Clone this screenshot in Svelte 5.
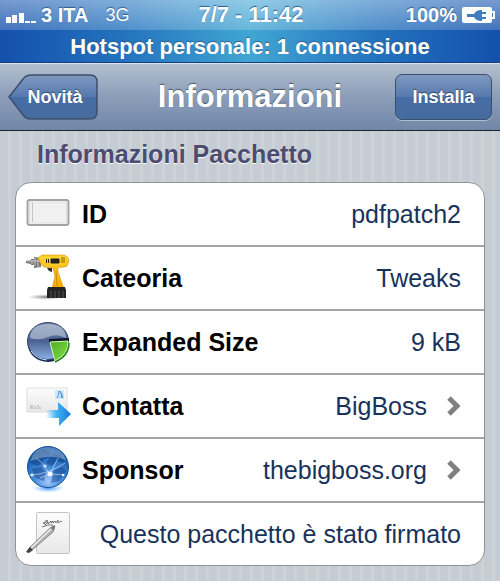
<script>
	const rows = [
		{ icon: 'id', label: 'ID', value: 'pdfpatch2' },
		{ icon: 'drill', label: 'Cateoria', value: 'Tweaks' },
		{ icon: 'size', label: 'Expanded Size', value: '9 kB' },
		{ icon: 'mail', label: 'Contatta', value: 'BigBoss', link: true },
		{ icon: 'globe', label: 'Sponsor', value: 'thebigboss.org', link: true },
		{ icon: 'signed', label: '', value: 'Questo pacchetto è stato firmato' }
	];
</script>

{#snippet icon(name)}
	<svg class="icon" viewBox="0 0 46 50" aria-hidden="true">
		{#if name === 'id'}
			<rect x="1.5" y="11" width="41" height="25" rx="2" fill="#fff" stroke="#a3a3a3" stroke-width="2" />
			<rect x="3.5" y="13" width="37" height="21" fill="#f0f0f0" stroke="#ddd" />
			<path d="M6.500 13.500V33" stroke="#c4c4c4" />
		{:else if name === 'drill'}
			<ellipse cx="20" cy="44" rx="19" ry="3" fill="url(#shadow)" />
			<path d="M0 8l5-1v-1h3V4l7 1v9l-7 1v-3H5v-1l-5-1z" fill="#777" />
			<path d="M1 8h13M6 7v4M9 5v8M12 6v8" stroke="#ccc" />
			<path d="M12 5l4-3h21q3 0 5 3l1 3-2 5q-3 2-9 1v5l6 17H26l3-13-2-8-9-1-3-3z" fill="url(#yellow)" stroke="#d48b00" stroke-width=".6" />
			<path d="M25 6h8v4h-8zM20.500 6v4M22.500 6v4" fill="#222" stroke="#222" />
			<path d="M35 5h4M35 7h4M35 9h4" stroke="#8b6000" />
			<path d="M21 15h5v4l-3-1z" fill="#333" />
			<path d="M30 18l1 15" stroke="#d18b00" fill="none" />
			<path d="M22 34h17l1 3v8H21v-8z" fill="#242424" />
			<path d="M25 38v7M29 38v7M33 38v7M37 38v7" stroke="#555" />
		{:else if name === 'size'}
			<ellipse cx="22" cy="26" rx="20.500" ry="19" fill="#172854" />
			<ellipse cx="22" cy="24" rx="20.500" ry="18.500" fill="url(#navy)" stroke="#35486f" />
			<path d="M4 21q1-14 18-14t18 14q-9-5-18-1-9 4-18 1z" fill="#fff" opacity=".4" />
			<path d="M23 22l20-1v4l-20 1z" fill="#091729" />
			<path d="M24 25l18-1q1 13-13 20z" fill="url(#green)" stroke="#d3ffb0" />
			<path d="M29 45q14-6 14-19" fill="none" stroke="#247e12" stroke-width="1.500" />
			<path d="M5 34q5 8 16 9" fill="none" stroke="#c2dcff" />
		{:else if name === 'mail'}
			<rect x="1" y="7" width="40" height="24" fill="url(#paper)" stroke="#ddd" />
			<rect x="29" y="9" width="9" height="9" fill="#cee6fa" />
			<path d="M31 17q2-2 2-7l3 3-1 4M34 10l3 7" fill="none" stroke="#4e91d4" />
			<path d="M4 25h5M4 27h11M11 25h2" stroke="#aaa" stroke-dasharray="3 1" />
			<path d="M20 29h12v-8l13 12-12 12v-8H20z" fill="url(#arrow)" />
		{:else if name === 'globe'}
			<ellipse cx="22" cy="43" rx="17" ry="5" fill="url(#glow)" />
			<circle cx="22" cy="22" r="20.500" fill="url(#blue)" stroke="#175293" />
			<path d="M9 8l8-4 8 3-1 5-6 2-2 5-5 2-7-3zM27 8l8 2 4 8-8-2-6 5-5-3zM6 24l9-2 5 5-2 9-8-3zM28 25l8-3 4 4-7 10-8 2z" fill="#062f70" opacity=".4" />
			<path d="M3 30q18 0 36-12M10 13q8 5 13 16M24 29l8-16M24 29l15 1M14 33l10-4" fill="none" stroke="#d4f0ff" stroke-width=".7" opacity=".8" />
			<path d="M5 16q2-13 17-14 14 1 18 13-16-7-35 1z" fill="#fff" opacity=".3" />
			<circle cx="24" cy="29" r="2.500" fill="#fff" opacity=".9" />
			<circle cx="37" cy="30" r="1.200" fill="#fff" />
			<circle cx="6" cy="30" r="1.500" fill="#fff" opacity=".8" />
			<circle cx="19" cy="21" r="1.500" fill="#fff" opacity=".8" />
		{:else}
			<rect x="10.500" y="3.500" width="33" height="41" rx="1" fill="url(#paper)" stroke="#c4c4c4" />
			<path d="M17 15q3-5 5-3l-4 2q2 1 1 2l3-3v2l3-3v2l2-2v2l2-2 1 2 2-3v3l3-2 1 1M16 18q7-3 11-2" fill="none" stroke="#555" stroke-width=".8" />
			<path d="M27 17l-3 2L3 39l-2 4 4-1 22-19 2-6z" fill="#b3b3b3" stroke="#777" stroke-width=".8" />
			<path d="M25 20L5 39" stroke="#eee" stroke-width="1.500" />
			<path d="M4 38l3 3-4 3-3-1z" fill="#444" />
			<path d="M25 19l3 3 1-6z" fill="#777" />
		{/if}
	</svg>
{/snippet}

<!-- gradients shared by the row icons -->
<svg class="defs" aria-hidden="true">
	<defs>
		<linearGradient id="yellow" x2="0" y2="1"><stop stop-color="#ffd52e" /><stop offset="1" stop-color="#f4a800" /></linearGradient>
		<linearGradient id="navy" x2="0" y2="1"><stop stop-color="#6d82aa" /><stop offset=".5" stop-color="#4a6292" /><stop offset="1" stop-color="#8db0e3" /></linearGradient>
		<linearGradient id="green" x2="1" y2="1"><stop stop-color="#4eab26" /><stop offset="1" stop-color="#83df45" /></linearGradient>
		<linearGradient id="paper" x2="0" y2="1"><stop stop-color="#fcfcfc" /><stop offset="1" stop-color="#e8e8e8" /></linearGradient>
		<linearGradient id="arrow"><stop stop-color="#4bbcf8" stop-opacity="0" /><stop offset=".4" stop-color="#41b5f5" /><stop offset="1" stop-color="#167ad9" /></linearGradient>
		<radialGradient id="blue" cy=".85" r=".8"><stop stop-color="#a4c9ff" /><stop offset=".4" stop-color="#468cda" /><stop offset="1" stop-color="#1253a4" /></radialGradient>
		<radialGradient id="glow"><stop stop-color="#398cff" /><stop offset="1" stop-color="#9fd2ff" stop-opacity="0" /></radialGradient>
		<radialGradient id="shadow"><stop stop-color="#777" /><stop offset="1" stop-color="#bbb" stop-opacity="0" /></radialGradient>
	</defs>
</svg>

<div class="screen">
	<header class="status">
		<div class="status-bar">
			<div class="carrier">
				<svg class="signal" viewBox="0 0 30 12" aria-hidden="true">
					<path d="M0 6h5v6H0zM6 4h5v8H6zM13 2h5v10h-5zM19 10h5v2h-5zM25 10h5v2h-5z" fill="#fff" />
				</svg>
				<span>3 ITA</span>
				<span class="network">3G</span>
			</div>
			<time>7/7 - 11:42</time>
			<div class="power">
				<span>100%</span>
				<svg class="battery" viewBox="0 0 34 18" aria-hidden="true">
					<path d="M2 1h26q2 0 2 2v2h3v8h-3v2q0 2-2 2H2q-2 0-2-2V3q0-2 2-2z" fill="#fff" />
					<path d="M5 8h7q2-4 7-4h1v2h4v2h-4v3h4v2h-4v2h-1q-5 0-7-4H5zM30 7h1v4h-1z" fill="#437cbd" />
				</svg>
			</div>
		</div>
		<div class="hotspot">Hotspot personale: 1 connessione</div>
	</header>

	<nav class="toolbar">
		<button class="back" type="button">
			<svg viewBox="0 0 90 46" aria-hidden="true">
				<defs>
					<linearGradient id="back-fill" x2="0" y2="1">
						<stop stop-color="#8099bf" /><stop offset=".5" stop-color="#5579ae" />
						<stop offset=".5" stop-color="#466da5" /><stop offset="1" stop-color="#466b9e" />
					</linearGradient>
				</defs>
				<path d="M1 24L15 5q3-4 8-4h59q7 0 7 7v30q0 7-7 7H23q-5 0-8-4z" fill="none" stroke="#adbdd2" />
				<path d="M1 23L15 5q3-4 8-4h59q7 0 7 7v30q0 7-7 7H23q-5 0-8-4z" fill="url(#back-fill)" stroke="#3b4e6b" stroke-width="1.500" />
			</svg>
			<span>Novità</span>
		</button>
		<h1>Informazioni</h1>
		<button class="install" type="button">Installa</button>
	</nav>

	<main>
		<h2>Informazioni Pacchetto</h2>
		<ul class="card">
			{#each rows as row}
				<li>
					<svelte:element this={row.link ? 'a' : 'div'} class="row" href={row.link ? '#' + row.icon : undefined}>
						{@render icon(row.icon)}
						{#if row.label}
							<span class="label">{row.label}</span>
						{/if}
						<span class="value">{row.value}</span>
						{#if row.link}
							<svg class="chevron" viewBox="0 0 14 20" aria-hidden="true">
								<path d="M2 2l8 8-8 8" fill="none" stroke="#808080" stroke-width="5" />
							</svg>
						{/if}
					</svelte:element>
				</li>
			{/each}
		</ul>
	</main>
</div>

<style>
	:global(body) {
		margin: 0;
		background: #c5ccd4;
	}
	.screen {
		min-height: 100vh;
		font-family: 'Liberation Sans', Arial, sans-serif;
		background: repeating-linear-gradient(90deg, #c5ccd4 0 8px, #cbd2d8 8px 11px);
	}
	.defs {
		position: absolute;
		width: 0;
		height: 0;
	}
	.status {
		color: #fff;
		font-weight: bold;
		background: linear-gradient(90deg, #1450ad, #2473be 25%, #41a6d3 50%, #2473be 75%, #1450ad);
		border-bottom: 1px solid #123f82;
		text-shadow: 0 -1px 1px #315e8f;
	}
	.status-bar {
		display: grid;
		grid-template-columns: 1fr auto 1fr;
		align-items: center;
		height: 30px;
		padding: 0 4px 0 6px;
		font-size: 20px;
		background: linear-gradient(rgba(255, 255, 255, 0.42), rgba(255, 255, 255, 0.2));
	}
	.carrier,
	.power {
		display: flex;
		align-items: center;
		gap: 5px;
	}
	.power {
		justify-content: flex-end;
	}
	.signal {
		width: 30px;
		height: 12px;
		margin-top: 4px;
	}
	.network {
		margin-left: 12px;
		font-size: 18px;
		font-weight: normal;
	}
	time {
		font-size: 22px;
	}
	.battery {
		width: 34px;
		height: 18px;
	}
	.hotspot {
		padding-top: 2px;
		font-size: 22px;
		line-height: 30px;
		text-align: center;
	}
	.toolbar {
		display: grid;
		grid-template-columns: 1fr auto 1fr;
		align-items: center;
		height: 68px;
		box-sizing: border-box;
		padding: 0 8px;
		background: linear-gradient(#b2bfce, #8c9db8 50%, #7187a8);
		border-top: 1px solid #dce3ea;
		border-bottom: 1px solid #20232c;
	}
	button {
		height: 46px;
		padding: 0;
		font: bold 18px 'Liberation Sans', Arial, sans-serif;
		color: #fff;
		text-shadow: 0 -1px 1px #344866;
		border: 0;
		background: none;
		cursor: pointer;
	}
	.back {
		display: grid;
		justify-self: start;
		width: 90px;
	}
	.back > * {
		grid-area: 1 / 1;
		align-self: center;
	}
	.back svg {
		width: 90px;
		height: 46px;
	}
	.back span {
		padding-left: 4px;
	}
	.install {
		justify-self: end;
		width: 97px;
		border: 1px solid #3b4e6b;
		border-radius: 7px;
		background: linear-gradient(#8099bf, #5579ae 50%, #466da5 50%, #466b9e);
		box-shadow: 0 1px 0 #adbdd2;
	}
	h1 {
		margin: 0;
		font-size: 31px;
		line-height: 36px;
		color: #fff;
		text-shadow: 0 -1px 1px #47566b;
	}
	main {
		padding: 7px 15px 14px;
	}
	h2 {
		margin: 0 0 12px;
		padding-left: 22px;
		font-size: 25px;
		line-height: 32px;
		color: #4c4c70;
		text-shadow: 0 1px 1px #fff;
	}
	.card {
		margin: 0;
		padding: 0;
		list-style: none;
		background: #fff;
		border: 1px solid #909396;
		border-radius: 16px;
	}
	.row {
		display: flex;
		align-items: center;
		height: 62px;
		padding: 0 23px 0 10px;
		border-bottom: 2px solid #a5a5a5;
		font-size: 25px;
		color: #18335b;
		text-decoration: none;
	}
	li:last-child .row {
		border-bottom: 0;
	}
	.icon {
		flex: none;
		width: 46px;
		height: 50px;
	}
	.label {
		margin-left: 10px;
		font-weight: bold;
		color: #000;
	}
	.value {
		margin-left: auto;
		white-space: nowrap;
	}
	.chevron {
		width: 14px;
		height: 20px;
		margin-left: 20px;
	}
</style>
